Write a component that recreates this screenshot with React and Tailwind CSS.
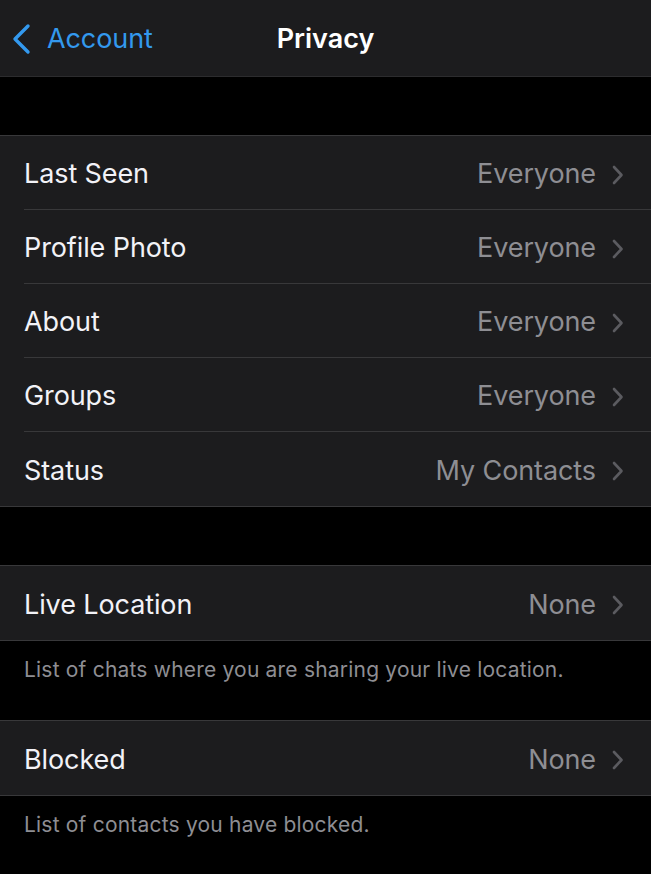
import React from 'react';

const font = { fontFamily: 'Inter, "Noto Sans", sans-serif' };

const Chevron = () => (
  <svg width="14" height="22" viewBox="0 0 14 22" className="ml-[15px] shrink-0">
    <path d="M3 3 L10.5 11 L3 19" fill="none" stroke="#5b5b60" strokeWidth="2.6" strokeLinecap="round" strokeLinejoin="round" />
  </svg>
);

const Row = ({ label, value, last }) => (
  <div className="flex h-[74px] items-stretch pl-6">
    <div className={`flex flex-1 items-center pr-[26px] pt-[4px] ${last ? '' : 'border-b border-[#38383a]'}`}>
      <span className="flex-1 text-[27px] text-[#f2f2f7] tracking-[-0.1px]">{label}</span>
      <span className="text-[27px] text-[#8e8e93] tracking-[-0.1px]">{value}</span>
      <Chevron />
    </div>
  </div>
);

const Group = ({ children }) => (
  <div className="border-y border-[#38383a] bg-[#1c1c1e]">{children}</div>
);

const privacyRows = [
  { label: 'Last Seen', value: 'Everyone' },
  { label: 'Profile Photo', value: 'Everyone' },
  { label: 'About', value: 'Everyone' },
  { label: 'Groups', value: 'Everyone' },
  { label: 'Status', value: 'My Contacts' },
];

export default function App() {
  return (
    <div className="min-h-[874px] w-full bg-black" style={font}>
      {/* nav bar */}
      <div className="relative flex h-[77px] items-center border-b border-[#2c2c2e] bg-[#1c1c1e]">
        <div className="flex items-center pl-[11px] pt-[2px] text-[#3399ee]">
          <svg width="22" height="32" viewBox="0 0 22 32">
            <path d="M17 3 L4 16 L17 29" fill="none" stroke="#3399ee" strokeWidth="3.4" strokeLinecap="round" strokeLinejoin="round" />
          </svg>
          <span className="ml-[14px] text-[27px] tracking-[-0.1px]">Account</span>
        </div>
        <div className="pointer-events-none absolute left-0 right-0 pt-[2px] text-center text-[27px] font-semibold text-white">
          Privacy
        </div>
      </div>

      <div className="h-[58px]" />

      <Group>
        {privacyRows.map((r, i) => (
          <Row key={r.label} {...r} last={i === privacyRows.length - 1} />
        ))}
      </Group>

      <div className="h-[58px]" />

      <Group>
        <Row label="Live Location" value="None" last />
      </Group>
      <div className="h-[79px] px-6 pt-[13px] text-[21px] tracking-[0.2px] text-[#8e8e93]">
        List of chats where you are sharing your live location.
      </div>

      <Group>
        <Row label="Blocked" value="None" last />
      </Group>
      <div className="px-6 pt-[13px] text-[21px] tracking-[0.2px] text-[#8e8e93]">
        List of contacts you have blocked.
      </div>
    </div>
  );
}
